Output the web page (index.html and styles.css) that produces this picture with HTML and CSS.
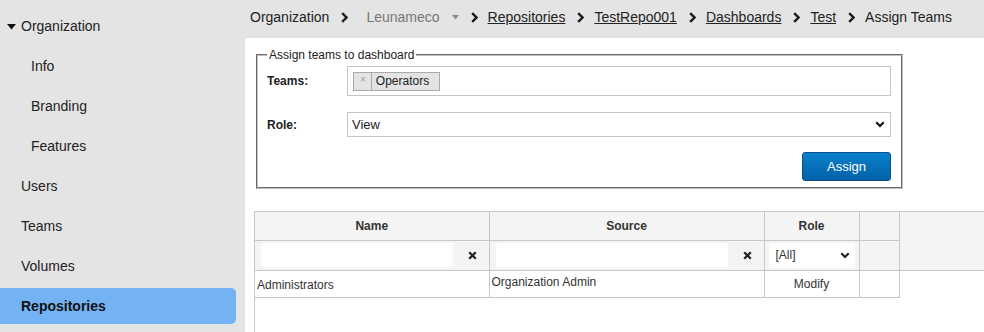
FILE: index.html
```html
<!DOCTYPE html>
<html>
<head>
<meta charset="utf-8">
<link rel="stylesheet" href="styles.css">
</head>
<body>
<div class="app">
  <nav class="sidebar">
    <div class="nav-item top"><svg class="caret" width="9" height="6" viewBox="0 0 9 6"><polygon points="0,0 9,0 4.5,5.5" fill="#111"/></svg>Organization</div>
    <div class="nav-item sub">Info</div>
    <div class="nav-item sub">Branding</div>
    <div class="nav-item sub">Features</div>
    <div class="nav-item">Users</div>
    <div class="nav-item">Teams</div>
    <div class="nav-item">Volumes</div>
    <div class="nav-item active">Repositories</div>
  </nav>
  <main class="main">
    <header class="crumbs">
      <span class="crumb">Organization</span>
      <svg class="sep" width="7" height="11" viewBox="0 0 7 11"><polyline points="1.2,1.2 5.5,5.5 1.2,9.8" fill="none" stroke="#1a1a1a" stroke-width="2.4"/></svg>
      <span class="crumb org">Leunameco<svg class="tri" width="7" height="5" viewBox="0 0 7 5"><polygon points="0,0 7,0 3.5,4.5" fill="#8a8a8a"/></svg></span>
      <svg class="sep" width="7" height="11" viewBox="0 0 7 11"><polyline points="1.2,1.2 5.5,5.5 1.2,9.8" fill="none" stroke="#1a1a1a" stroke-width="2.4"/></svg>
      <a class="crumb link">Repositories</a>
      <svg class="sep" width="7" height="11" viewBox="0 0 7 11"><polyline points="1.2,1.2 5.5,5.5 1.2,9.8" fill="none" stroke="#1a1a1a" stroke-width="2.4"/></svg>
      <a class="crumb link">TestRepo001</a>
      <svg class="sep" width="7" height="11" viewBox="0 0 7 11"><polyline points="1.2,1.2 5.5,5.5 1.2,9.8" fill="none" stroke="#1a1a1a" stroke-width="2.4"/></svg>
      <a class="crumb link">Dashboards</a>
      <svg class="sep" width="7" height="11" viewBox="0 0 7 11"><polyline points="1.2,1.2 5.5,5.5 1.2,9.8" fill="none" stroke="#1a1a1a" stroke-width="2.4"/></svg>
      <a class="crumb link">Test</a>
      <svg class="sep" width="7" height="11" viewBox="0 0 7 11"><polyline points="1.2,1.2 5.5,5.5 1.2,9.8" fill="none" stroke="#1a1a1a" stroke-width="2.4"/></svg>
      <span class="crumb">Assign Teams</span>
    </header>
    <section class="content">
      <fieldset class="assign">
        <legend>Assign teams to dashboard</legend>
        <div class="form">
          <label class="lbl">Teams:</label>
          <div class="multi">
            <span class="tag"><span class="tag-x">×</span><span class="tag-text">Operators</span></span>
          </div>
          <label class="lbl">Role:</label>
          <div class="select">
            <span>View</span>
            <svg width="10" height="7" viewBox="0 0 10 7"><polyline points="1.3,1.3 5,5 8.7,1.3" fill="none" stroke="#111" stroke-width="2.2"/></svg>
          </div>
          <div class="actions"><button class="btn">Assign</button></div>
        </div>
      </fieldset>

      <div class="grid">
        <div class="grid-head">
          <table class="tbl">
            <colgroup><col class="c1"><col class="c2"><col class="c3"><col class="c4"></colgroup>
            <tr class="hrow">
              <th>Name</th><th>Source</th><th>Role</th><th></th>
            </tr>
            <tr class="frow">
              <td><div class="filter"><span class="finput"></span><svg class="clear" width="9" height="9" viewBox="0 0 9 9"><path d="M1.2 1.2 L7.8 7.8 M7.8 1.2 L1.2 7.8" stroke="#222" stroke-width="2.2"/></svg></div></td>
              <td><div class="filter"><span class="finput"></span><svg class="clear" width="9" height="9" viewBox="0 0 9 9"><path d="M1.2 1.2 L7.8 7.8 M7.8 1.2 L1.2 7.8" stroke="#222" stroke-width="2.2"/></svg></div></td>
              <td><div class="fselect"><span>[All]</span><svg width="10" height="7" viewBox="0 0 10 7"><polyline points="1.3,1.3 5,5 8.7,1.3" fill="none" stroke="#222" stroke-width="2.2"/></svg></div></td>
              <td></td>
            </tr>
          </table>
        </div>
        <table class="tbl body">
          <colgroup><col class="c1"><col class="c2"><col class="c3"><col class="c4"></colgroup>
          <tr class="drow">
            <td class="name">Administrators</td><td class="src">Organization Admin</td><td class="role">Modify</td><td></td>
          </tr>
        </table>
      </div>
    </section>
  </main>
</div>
</body>
</html>
```
FILE: styles.css
```css
* { box-sizing: border-box; }
html, body { margin: 0; padding: 0; height: 100%; }
body {
  font-family: "Liberation Sans", Arial, sans-serif;
  font-size: 14px;
  color: #222;
  background: #fff;
  overflow: hidden;
}
.app { display: flex; height: 332px; }

.sidebar {
  width: 245px;
  flex: none;
  background: #e4e4e4;
  padding-top: 8px;
  display: flex;
  flex-direction: column;
  gap: 4px;
}
.nav-item {
  height: 36px;
  width: 236px;
  display: flex;
  align-items: center;
  padding-left: 21px;
  color: #222;
  font-size: 14px;
}
.nav-item.top { padding-left: 7px; }
.caret { margin-right: 5px; margin-top: 1px; }
.nav-item.sub { padding-left: 31px; }
.nav-item.active {
  background: #74b3f3;
  font-weight: bold;
  color: #111;
  border-radius: 0 5px 5px 0;
}

.main { flex: 1; display: flex; flex-direction: column; min-width: 0; }
.crumbs {
  height: 38px;
  background: #e4e4e4;
  display: flex;
  align-items: center;
  padding: 0 0 4px 5px;
  white-space: nowrap;
}
.crumb { color: #222; }
.link { text-decoration: underline; color: #222; }
.sep { margin: 0 10px 0 12px; flex: none; }
.org { color: #777; padding-left: 8px; display: flex; align-items: center; }
.tri { margin-left: 12px; }

.content { padding: 10px 0 0 9px; flex: 1; display: flex; flex-direction: column; }

.assign {
  margin: 0 0 0 2px;
  width: 647px;
  height: 141px;
  font-size: 12px;
  border: 2px groove #c0c0c0;
  padding: 4px 10px 7px 9px;
}
.assign legend { padding: 0 2px; color: #222; font-size: 12px; }
.form {
  display: grid;
  grid-template-columns: 80px 1fr;
  align-items: center;
}
.lbl { font-weight: bold; color: #222; }
.multi {
  height: 30px;
  border: 1px solid #c4c4c4;
  padding: 5px 5px;
  display: flex;
  align-items: flex-start;
}
.tag {
  display: inline-flex;
  height: 19px;
  background: #e4e4e4;
  border: 1px solid #aaa;
  font-size: 12px;
  align-items: stretch;
}
.tag-x {
  color: #999;
  font-size: 10px;
  padding: 0 5px 0 6px;
  border-right: 1px solid #aaa;
  line-height: 13px;
}
.tag-text { padding: 0 10px 0 4px; line-height: 17px; color: #222; }
.select {
  margin-top: 16px;
  height: 25px;
  border: 1px solid #c4c4c4;
  display: flex;
  align-items: center;
  justify-content: space-between;
  padding: 0 5px 0 4px;
  font-size: 13px;
}
.lbl:nth-of-type(2) { margin-top: 16px; }
.actions {
  grid-column: 1 / 3;
  display: flex;
  justify-content: flex-end;
  margin-top: 15px;
}
.btn {
  width: 89px;
  height: 29px;
  border: 1px solid #0a4f86;
  border-radius: 3px;
  background: linear-gradient(#0a80cc, #0062a8);
  color: #fff;
  font-family: "Liberation Sans", Arial, sans-serif;
  font-size: 13px;
  padding: 0;
}

.grid {
  margin-top: 22px;
  margin-right: -10px;
  flex: 1;
  border-left: 1px solid #c6c6c6;
  border-top: 1px solid #c6c6c6;
}
.grid-head {
  background: #f4f4f4;
  border-bottom: 1px solid #c6c6c6;
}
.tbl {
  border-collapse: collapse;
  table-layout: fixed;
  width: 644px;
  font-size: 12px;
  color: #333;
}
.c1 { width: 234px; }
.c2 { width: 275px; }
.c3 { width: 95px; }
.c4 { width: 40px; }
.tbl th, .tbl td { border-right: 1px solid #c6c6c6; padding: 0; }
.hrow th {
  height: 28px;
  font-weight: bold;
  color: #333;
  text-align: center;
  border-bottom: 1px solid #c6c6c6;
  padding-top: 1px;
}
.frow td { height: 30px; }
.filter { display: flex; align-items: center; padding: 0 12px 0 6px; }
.finput {
  flex: 1;
  height: 24px;
  background: #fff;
  border-radius: 3px;
  margin-right: 15px;
}
.fselect {
  margin: 0 4px 0 4px;
  height: 25px;
  background: #fff;
  border-radius: 3px;
  display: flex;
  align-items: center;
  justify-content: space-between;
  padding: 0 5px 0 7px;
  font-size: 12px;
}
.body td {
  height: 26px;
  border-bottom: 1px solid #c6c6c6;
  background: #fff;
}
.drow .name { padding: 3px 0 0 2px; }
.drow .src { padding: 0 0 3px 2px; }
.drow .role { text-align: center; padding-top: 1px; }
```
